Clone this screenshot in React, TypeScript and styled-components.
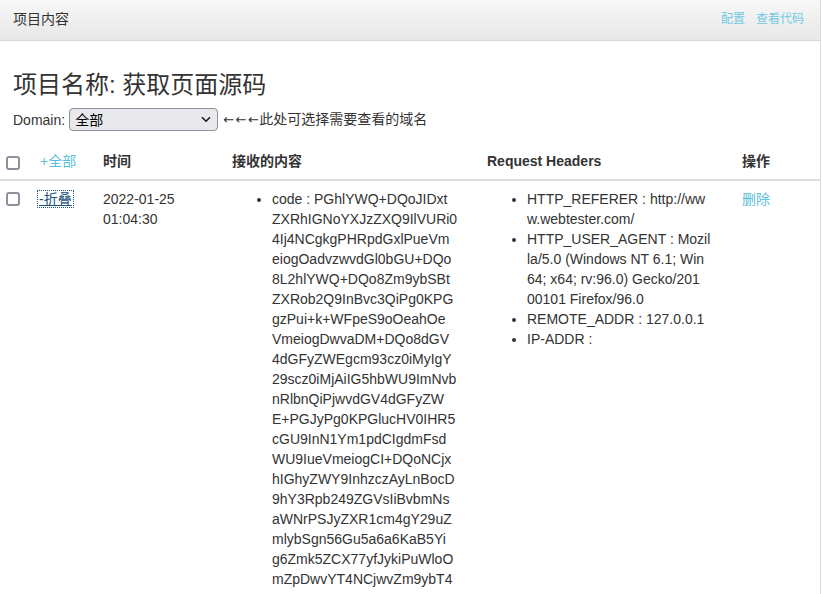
import React from "react";
import styled, { createGlobalStyle } from "styled-components";

const GlobalStyle = createGlobalStyle`
  html, body { margin: 0; padding: 0; background: #fff; }
  body {
    font-family: "Liberation Sans", Arial, "Noto Sans CJK SC", sans-serif;
    font-size: 14px;
    line-height: 20px;
    color: #333;
  }
  * { box-sizing: border-box; }
`;

const Page = styled.div`
  width: 821px;
  min-height: 100vh;
  border-right: 1px solid #dcdcdc;
`;

const Navbar = styled.div`
  height: 41px;
  display: flex;
  align-items: center;
  justify-content: space-between;
  padding: 0 16px 0 13px;
  background: linear-gradient(to bottom, #f7f7f7 0%, #e8e8e8 100%);
  border-bottom: 1px solid #d6d6d6;
`;

const Brand = styled.div`
  font-size: 14px;
  color: #333;
  padding-bottom: 2px;
`;

const NavLinks = styled.div`
  display: flex;
  gap: 11px;
  padding-bottom: 2px;
`;

const NavLink = styled.a`
  font-size: 12px;
  color: #72cae2;
  text-decoration: none;
`;

const Content = styled.div`
  padding: 0 0 0 13px;
`;

const Title = styled.h3`
  margin: 31px 0 10px;
  font-size: 24px;
  line-height: 26px;
  font-weight: 400;
  color: #333;
`;

const DomainRow = styled.div`
  display: flex;
  align-items: center;
  gap: 4px;
  height: 23px;
  font-size: 14px;
`;

const SelectWrap = styled.div`
  position: relative;
  width: 149px;
  height: 23px;
`;

const Select = styled.select`
  appearance: none;
  width: 100%;
  height: 100%;
  padding: 0 24px 0 5px;
  font-family: "Liberation Sans", Arial, "Noto Sans CJK SC", sans-serif;
  font-size: 14px;
  color: #000;
  background: #e9e9ed;
  border: 1px solid #8f8f9d;
  border-radius: 4px;
`;

const Chevron = styled.svg`
  position: absolute;
  right: 7px;
  top: 8px;
  pointer-events: none;
`;

const Hint = styled.span`
  color: #333;
  margin-left: 1px;
`;

const Arrows = styled.span`
  font-family: "DejaVu Sans", sans-serif;
  font-size: 13px;
  letter-spacing: 1.5px;
  margin-right: -1px;
`;

const Table = styled.table`
  margin-top: 12px;
  margin-left: -13px;
  width: 820px;
  border-collapse: collapse;
  table-layout: fixed;
`;

const Th = styled.th<{ $first?: boolean }>`
  text-align: left;
  font-weight: 700;
  padding: ${(p) => (p.$first ? "8px 0 8px 6px" : "8px")};
  line-height: 20px;
  border-bottom: 2px solid #dddddd;
  vertical-align: middle;
`;

const Td = styled.td<{ $first?: boolean }>`
  padding: ${(p) => (p.$first ? "8px 0 8px 6px" : "8px")};
  line-height: 20px;
  vertical-align: top;
  color: #333;
`;

const Check = styled.input.attrs({ type: "checkbox" })`
  appearance: none;
  display: block;
  width: 14px;
  height: 14px;
  margin: 3px 0 0 0;
  border: 2px solid #8f8f9d;
  border-radius: 3px;
  background: #fff;
`;

const LightLink = styled.a<{ $normal?: boolean }>`
  color: #5bc0de;
  text-decoration: none;
  font-weight: ${(p) => (p.$normal ? 400 : "inherit")};
`;

const FocusLink = styled.a`
  color: #23527c;
  text-decoration: underline;
  text-decoration-color: #23527c;
  outline: 1px dotted #23527c;
  outline-offset: 0px;
  padding: 0 1px;
  margin-left: -2px;
`;

const List = styled.ul`
  margin: 0;
  padding-left: 40px;
`;

const Item = styled.li`
  white-space: nowrap;
`;

const codeLines = [
  "code : PGhlYWQ+DQoJIDxt",
  "ZXRhIGNoYXJzZXQ9IlVURi0",
  "4Ij4NCgkgPHRpdGxlPueVm",
  "eiogOadvzwvdGl0bGU+DQo",
  "8L2hlYWQ+DQo8Zm9ybSBt",
  "ZXRob2Q9InBvc3QiPg0KPG",
  "gzPui+k+WFpeS9oOeahOe",
  "VmeiogDwvaDM+DQo8dGV",
  "4dGFyZWEgcm93cz0iMyIgY",
  "29scz0iMjAiIG5hbWU9ImNvb",
  "nRlbnQiPjwvdGV4dGFyZW",
  "E+PGJyPg0KPGlucHV0IHR5",
  "cGU9InN1Ym1pdCIgdmFsd",
  "WU9IueVmeiogCI+DQoNCjx",
  "hIGhyZWY9InhzczAyLnBocD",
  "9hY3Rpb249ZGVsIiBvbmNs",
  "aWNrPSJyZXR1cm4gY29uZ",
  "mlybSgn56Gu5a6a6KaB5Yi",
  "g6Zmk5ZCX77yfJykiPuWloO",
  "mZpDwvYT4NCjwvZm9ybT4",
];

const headerItems: string[][] = [
  ["HTTP_REFERER : http://ww", "w.webtester.com/"],
  [
    "HTTP_USER_AGENT : Mozil",
    "la/5.0 (Windows NT 6.1; Win",
    "64; x64; rv:96.0) Gecko/201",
    "00101 Firefox/96.0",
  ],
  ["REMOTE_ADDR : 127.0.0.1"],
  ["IP-ADDR :"],
];

const Lines: React.FC<{ lines: string[] }> = ({ lines }) => (
  <>
    {lines.map((l, i) => (
      <React.Fragment key={i}>
        {i > 0 && <br />}
        {l}
      </React.Fragment>
    ))}
  </>
);

export default function App() {
  return (
    <Page>
      <GlobalStyle />
      <Navbar>
        <Brand>项目内容</Brand>
        <NavLinks>
          <NavLink href="#">配置</NavLink>
          <NavLink href="#">查看代码</NavLink>
        </NavLinks>
      </Navbar>
      <Content>
        <Title>项目名称: 获取页面源码</Title>
        <DomainRow>
          <span>Domain:</span>
          <SelectWrap>
            <Select defaultValue="all">
              <option value="all">全部</option>
            </Select>
            <Chevron width="10" height="7" viewBox="0 0 10 7">
              <path d="M1 1.2 L5 5.2 L9 1.2" fill="none" stroke="#1a1a1a" strokeWidth="1.6" />
            </Chevron>
          </SelectWrap>
          <Hint>
            <Arrows>←←←</Arrows>此处可选择需要查看的域名
          </Hint>
        </DomainRow>
        <Table>
          <colgroup>
            <col style={{ width: 32 }} />
            <col style={{ width: 63 }} />
            <col style={{ width: 129 }} />
            <col style={{ width: 255 }} />
            <col style={{ width: 255 }} />
            <col style={{ width: 86 }} />
          </colgroup>
          <thead>
            <tr>
              <Th $first>
                <Check />
              </Th>
              <Th>
                <LightLink href="#" $normal>+全部</LightLink>
              </Th>
              <Th>时间</Th>
              <Th>接收的内容</Th>
              <Th>Request Headers</Th>
              <Th>操作</Th>
            </tr>
          </thead>
          <tbody>
            <tr>
              <Td $first>
                <Check />
              </Td>
              <Td>
                <FocusLink href="#">-折叠</FocusLink>
              </Td>
              <Td>
                2022-01-25
                <br />
                01:04:30
              </Td>
              <Td>
                <List>
                  <Item>
                    <Lines lines={codeLines} />
                  </Item>
                </List>
              </Td>
              <Td>
                <List>
                  {headerItems.map((it, i) => (
                    <Item key={i}>
                      <Lines lines={it} />
                    </Item>
                  ))}
                </List>
              </Td>
              <Td>
                <LightLink href="#">删除</LightLink>
              </Td>
            </tr>
          </tbody>
        </Table>
      </Content>
    </Page>
  );
}
